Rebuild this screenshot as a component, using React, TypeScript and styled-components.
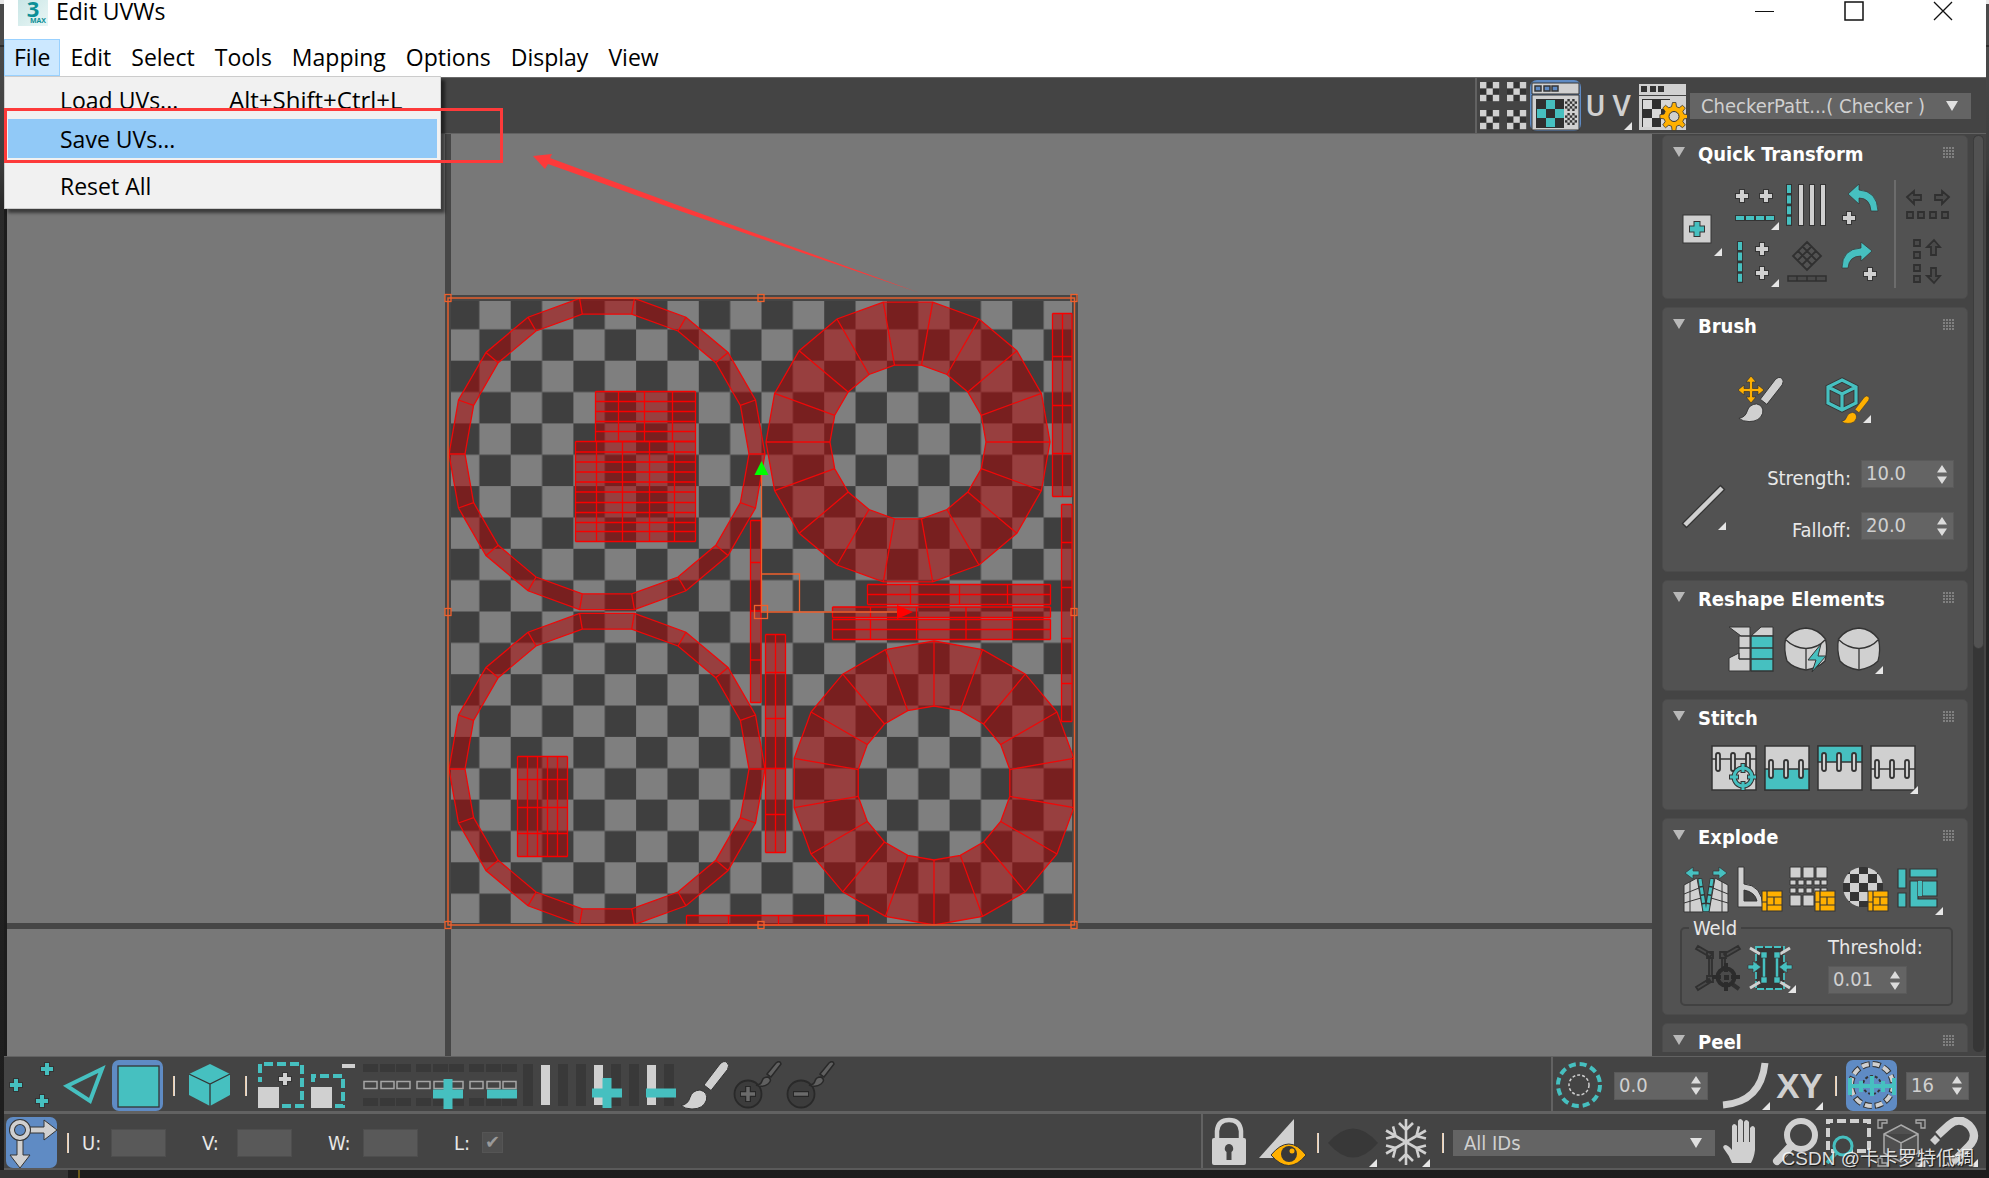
import React from 'react';
import styled, { createGlobalStyle, css } from 'styled-components';

const LIGHT = '#d0d0d0';
const TEAL = '#46c0c0';
const AMBER = '#ffb000';
const INK = '#343434';
const BLUE = '#5f8bc4';
const PANEL = '#444444';
const UI = "'DejaVu Sans Condensed', 'Noto Sans', sans-serif";
const SYS = "'Open Sans', 'Noto Sans', sans-serif";

const GlobalStyle = createGlobalStyle`
  * { box-sizing: border-box; }
  html, body { margin: 0; padding: 0; background: #232323; overflow: hidden; }
  button, input, select { font: inherit; color: inherit; margin: 0; }
`;

/* ---------- frame ---------- */

const Desktop = styled.div`
  position: relative;
  height: 100vh;
  padding: 0 3px 8px 4px;
  background:
    linear-gradient(90deg, #363636 68px, transparent 68px, transparent 78px, #6b5a1c 78px, #6b5a1c 80px, transparent 80px) bottom / 100% 8px no-repeat,
    linear-gradient(#e8e8e8 4px, #4a4a4a 4px, #4a4a4a 45px, #2c2c2c 45px, #2c2c2c 47px, #4a4a4a 47px, #3d3d3d 160px, #2a2a2a 205px, #1d1d1d) top / 100% 100% no-repeat;
`;
const Window = styled.div`
  display: flex;
  flex-direction: column;
  height: 100%;
  background: ${PANEL};
`;
const TitleBar = styled.header`
  display: flex;
  align-items: flex-start;
  height: 39px;
  padding: 0 19px 0 14px;
  background: #fff;
  color: #000;
  font: 23px/22px ${SYS};
`;
const AppIcon = styled.span`
  display: flex;
  flex-direction: column;
  width: 30px;
  height: 26px;
  margin-right: 8px;
  background: linear-gradient(135deg, #c9e6e6, #e9f6f5);
  color: #0d8f97;
  font: 700 22px/17px ${SYS};
  text-align: center;
`;
const AppIconTag = styled.small`
  padding-left: 10px;
  font: 700 7px/8px ${SYS};
`;
const WindowTitle = styled.h1`
  flex: 1;
  margin: 0;
  font: inherit;
`;
const WindowButtons = styled.div`
  display: flex;
  gap: 40px;
`;
const WindowButton = styled.button`
  width: 49px;
  height: 22px;
  padding: 0;
  border: 0;
  background: none;
  svg { display: block; margin: 0 auto; }
`;
const MenuBar = styled.nav`
  position: relative;
  display: flex;
  height: 38px;
  background: #fff;
  color: #000;
  font: 23px/34px ${SYS};
`;
const MenuButton = styled.button<{ $open?: boolean }>`
  height: 37px;
  padding: 0 9px 1px;
  border: 1px solid ${p => (p.$open ? '#99d1ff' : 'transparent')};
  background: ${p => (p.$open ? '#cce8ff' : 'none')};
`;
const Menu = styled.div`
  position: absolute;
  z-index: 3;
  top: 37px;
  left: 0;
  width: 437px;
  padding: 3px;
  border: 1px solid #cccccc;
  background: #f1f1f1;
  box-shadow: 4px 4px 3px rgba(0, 0, 0, 0.5);
  line-height: 36px;
`;
const MenuItem = styled.button<{ $hot?: boolean }>`
  display: grid;
  grid-template-columns: 169px 1fr;
  width: 100%;
  height: 39px;
  padding: 2px 0 0 52px;
  border: 0;
  background: ${p => (p.$hot ? '#91c9f7' : 'none')};
  text-align: left;
`;
const Shortcut = styled.span`
  font-size: 24px;
`;
const MenuRule = styled.hr`
  height: 1px;
  margin: 3px 0 4px 40px;
  border: 0;
  background: #d0d0d0;
`;

/* ---------- shared tool parts ---------- */

const ToolButton = styled.button<{ $on?: boolean }>`
  position: relative;
  flex: none;
  width: 51px;
  height: 51px;
  padding: 0;
  border: 0;
  border-radius: 7px;
  background: ${p => (p.$on ? BLUE : 'none')};
  svg { display: block; }
`;
const Flyout = styled.span`
  position: absolute;
  right: 2px;
  bottom: 1px;
  border-bottom: 8px solid #e6e6e6;
  border-left: 8px solid transparent;
`;
const Glyph = styled.span`
  display: block;
  color: ${LIGHT};
  font: 700 35px/46px 'Liberation Sans', sans-serif;
  white-space: nowrap;
`;
const ThinGlyph = styled(Glyph)`
  font: 500 29px/46px Roboto, sans-serif;
`;
const Bar = styled.span<{ $w?: number }>`
  flex: none;
  width: ${p => p.$w || 17}px;
  height: 20px;
  background: linear-gradient(90deg, #f3c596, #d8e4f0) center / 2px 100% no-repeat;
`;
const Group = styled.div<{ $gap?: number; $rule?: boolean }>`
  display: flex;
  align-items: center;
  gap: ${p => p.$gap ?? 2}px;
  ${p => p.$rule && css`
    align-self: stretch;
    border-left: 2px solid #626262;
  `}
`;
const SelectBox = styled.span<{ $w: number }>`
  position: relative;
  width: ${p => p.$w}px;
  height: 26px;
  &::after {
    content: '';
    position: absolute;
    top: 8px;
    right: 13px;
    border-top: 10px solid #e0e0e0;
    border-left: 6px solid transparent;
    border-right: 6px solid transparent;
  }
`;
const Select = styled.select`
  appearance: none;
  display: block;
  width: 100%;
  height: 100%;
  padding: 0 30px 0 11px;
  border: 0;
  background: #646464;
  color: ${LIGHT};
  font: 20px/26px ${UI};
`;
const SpinBox = styled.span<{ $w: number }>`
  display: flex;
  align-items: center;
  flex: none;
  width: ${p => p.$w}px;
  height: 28px;
  padding-right: 6px;
  border: 1px solid #5a5a5a;
  background: #646464;
`;
const SpinInput = styled.input`
  flex: 1;
  min-width: 0;
  height: 24px;
  padding: 0 0 2px 4px;
  border: 0;
  background: none;
  color: ${LIGHT};
  font: 20px/24px ${UI};
`;
const Label = styled.label`
  color: #e8e8e8;
  font: 20px/24px ${UI};
`;

/* ---------- top tool bar ---------- */

const TopBar = styled.div`
  display: flex;
  justify-content: flex-end;
  height: 57px;
  border-top: 1px solid #6a6a6a;
  border-bottom: 1px solid #626262;
  padding-right: 15px;
  ${SelectBox} { margin-left: 1px; }
`;

/* ---------- work area ---------- */

const Work = styled.main`
  display: flex;
  flex: 1;
  min-height: 0;
`;
const Viewport = styled.section`
  flex: 1;
  min-width: 0;
  border-left: 3px solid #1c1c1c;
  background: #787878;
  svg { display: block; }
`;
const Sidebar = styled.aside`
  display: flex;
  gap: 5px;
  padding: 1px 2px 4px 10px;
`;
const Rollups = styled.div`
  display: flex;
  flex-direction: column;
  gap: 8px;
  width: 306px;
  overflow: hidden;
`;
const Scroll = styled.div`
  width: 11px;
  border-radius: 6px;
  background: #363636;
`;
const Thumb = styled.div`
  height: 56%;
  border: 1px solid #3c3c3c;
  border-radius: 6px;
  background: #525252;
`;
const Rollup = styled.section`
  flex: none;
  border: 1px solid #4b4b4b;
  border-radius: 5px;
  background: #525252;
`;
const RollupHead = styled.header`
  display: flex;
  align-items: center;
  height: 36px;
  padding: 0 13px 0 10px;
`;
const Caret = styled.span`
  margin-right: 13px;
  margin-bottom: 4px;
  border-top: 10px solid #b8b8b8;
  border-left: 6px solid transparent;
  border-right: 6px solid transparent;
`;
const RollupTitle = styled.h2`
  flex: 1;
  margin: 0;
  color: #fff;
  font: 700 20px/28px ${UI};
`;
const Grip = styled.span`
  width: 12px;
  height: 12px;
  margin-bottom: 4px;
  background:
    repeating-linear-gradient(90deg, #525252 0 1px, transparent 1px 3px),
    repeating-linear-gradient(#525252 0 1px, #808080 1px 3px);
`;
const IconRow = styled.div<{ $left: number; $top: number; $bottom?: number; $gap?: number }>`
  display: flex;
  gap: ${p => p.$gap ?? 2}px;
  padding: ${p => p.$top}px 0 ${p => p.$bottom ?? 0}px ${p => p.$left}px;
`;
const QuickBody = styled.div`
  display: flex;
  align-items: center;
  gap: 6px;
  padding: 8px 0 10px 10px;
  > button { margin-bottom: 6px; }
`;
const QuickGrid = styled.div<{ $cols: number }>`
  display: grid;
  grid-template-columns: repeat(${p => p.$cols}, 51px);
  gap: 6px 2px;
`;
const QuickRule = styled.span`
  align-self: stretch;
  width: 2px;
  margin: 0 3px 0 1px;
  background: #6c6c6c;
`;
const BrushBody = styled.div`
  display: flex;
  justify-content: space-between;
  align-items: center;
  padding: 36px 13px 29px 14px;
  > button { margin-top: 8px; }
`;
const Fields = styled.div`
  display: grid;
  grid-template-columns: auto 93px;
  gap: 22px 10px;
  justify-items: end;
  ${Label} { padding-top: 6px; }
`;
const Weld = styled.fieldset`
  display: flex;
  gap: 2px;
  margin: 0 14px 8px 17px;
  padding: 3px 0 10px 12px;
  border: 2px solid #414141;
  border-radius: 5px;
`;
const Legend = styled.legend`
  margin-left: -5px;
  padding: 0 4px;
  color: #e8e8e8;
  font: 20px/24px ${UI};
`;
const Threshold = styled.div`
  display: flex;
  flex-direction: column;
  gap: 7px;
  margin: -8px 0 0 28px;
`;

/* ---------- bottom bars ---------- */

const BottomRow = styled.div<{ $last?: boolean }>`
  display: flex;
  justify-content: space-between;
  height: ${p => (p.$last ? 59 : 55)}px;
  padding-left: 2px;
  border-top: ${p => (p.$last ? 3 : 1)}px solid #626262;
  ${p => p.$last && css`border-bottom: 2px solid #5a5a5a;`}
  > div { padding-top: 3px; }
`;
const Coord = styled.span<{ $label: number }>`
  display: grid;
  grid-template-columns: ${p => p.$label}px auto;
  align-items: center;
`;
const Coords = styled.div`
  display: flex;
  align-items: center;
  gap: 36px;
  padding-left: 4px;
`;
const CoordInput = styled.input`
  width: 55px;
  height: 28px;
  border: 1px solid #4e4e4e;
  background: #595959;
`;
const Check = styled.input`
  appearance: none;
  width: 21px;
  height: 21px;
  border: 1px solid #555;
  background: #4f4f4f;
  &:checked::after {
    content: '✔';
    display: block;
    color: #999;
    font: 18px/18px 'DejaVu Sans', sans-serif;
    text-align: center;
  }
`;
const RightRow = styled(Group)`
  padding-right: 6px;
`;
const SpinGap = styled.span<{ $l: number; $r: number }>`
  display: flex;
  padding: 0 ${p => p.$r}px 0 ${p => p.$l}px;
`;
const Annotation = styled.svg`
  position: absolute;
  z-index: 4;
  top: 0;
  left: 0;
  pointer-events: none;
`;
const Watermark = styled.span`
  position: absolute;
  z-index: 5;
  right: 15px;
  bottom: 5px;
  color: rgba(255, 255, 255, 0.86);
  font: 19px/28px 'Liberation Sans', 'Noto Sans CJK SC', sans-serif;
  text-shadow: 1px 1px 1px rgba(0, 0, 0, 0.7);
  white-space: nowrap;
`;

/* ---------- icon drawing helpers ---------- */

const Plus = ({ x, y, r = 6, w = 4, c = LIGHT }: { x: number; y: number; r?: number; w?: number; c?: string }) => (
  <g>
    <path d={`M${x - r - 1} ${y}h${2 * r + 2}M${x} ${y - r - 1}v${2 * r + 2}`} stroke={INK} strokeWidth={w + 2} />
    <path d={`M${x - r} ${y}h${2 * r}M${x} ${y - r}v${2 * r}`} stroke={c} strokeWidth={w} />
  </g>
);

const Tool = ({ label, on, fly, children }: { label: string; on?: boolean; fly?: boolean; children: React.ReactNode }) => (
  <ToolButton type="button" aria-label={label} title={label} $on={on}>
    <svg width="51" height="51" viewBox="0 0 51 51" fill="none">{children}</svg>
    {fly && <Flyout />}
  </ToolButton>
);

const Spin = ({ id, value, w }: { id: string; value: string; w: number }) => (
  <SpinBox $w={w}>
    <SpinInput id={id} defaultValue={value} aria-label={id} />
    <svg width="10" height="19" viewBox="0 0 10 19" fill="#dcdcdc"><path d="M0 7.500L5 0l5 7.500zM0 11.500h10L5 19z" /></svg>
  </SpinBox>
);

const checks = (n: number, s: number, x: number, y: number, a: string, b?: string) => {
  const out: React.ReactNode[] = [];
  for (let i = 0; i < n; i++)
    for (let j = 0; j < n; j++) {
      const fill = (i + j) % 2 === 0 ? a : b;
      if (fill) out.push(<rect key={`${i}${j}`} x={x + i * s} y={y + j * s} width={s} height={s} fill={fill} />);
    }
  return out;
};

const BrushShape = ({ c = LIGHT }: { c?: string }) => (
  <g stroke={INK} strokeWidth="1">
    <path d="M24 25L40 4q4-4 7-1.500t.5 7L31 30.500z" fill={c} />
    <path d="M1 45.500q7-1 9-8t10-7.500q8 2 6.500 10-3 9-14.500 9-7 0-11-3.500z" fill={c} />
  </g>
);

const LoopRows = () => (
  <g>
    {[1, 18, 34].map(x => (
      <g key={x}>
        <rect x={x} y="4" width="15" height="8" fill="#393939" />
        <rect x={x} y="38" width="15" height="8" fill="#393939" />
        <rect x={x + 1} y="21.500" width="13" height="7" stroke="#a5a5a5" strokeWidth="1.500" />
      </g>
    ))}
  </g>
);
const RingCols = () => (
  <g>
    <path d="M2 4h10v42H2zM37 4h10v42H37z" fill="#393939" />
    <rect x="20" y="5" width="9" height="40" fill={LIGHT} />
  </g>
);
const PaintSel = ({ minus }: { minus?: boolean }) => (
  <g>
    <circle cx="15" cy="34" r="13.500" fill="#3c3c3c" stroke="#292929" strokeWidth="1.800" />
    <path d={minus ? 'M7 34h16' : 'M7 34h16M15 26v16'} stroke="#272727" strokeWidth="6" />
    <path d={minus ? 'M8 34h14' : 'M8 34h14M15 27v14'} stroke="#6b6b6b" strokeWidth="3.500" />
    <path d="M34 14l9-11q4-3 5 1L38 17zM23 25q5 0 6-4t6-4q5 3 0 7-5 4-12 1z" fill="#606060" stroke="#292929" strokeWidth="1.500" />
  </g>
);
const Stitches = ({ y }: { y: number }) => (
  <g fill={LIGHT} stroke={INK} strokeWidth="1.800">
    {[8, 23, 38].map(x => <rect key={x} x={x - 2} y={y} width="4" height="18" rx="2" />)}
  </g>
);
const Packed = ({ x, y }: { x: number; y: number }) => (
  <g transform={`translate(${x} ${y})`}>
    <rect width="20" height="20" fill={AMBER} stroke={INK} />
    <path d="M5 0v20M0 11h5M5 6h15M12 6v8h8M12 14H5" stroke={INK} strokeWidth="1.200" />
  </g>
);
const Disp = ({ d, fill = '#4a4a4a' }: { d: string; fill?: string }) => (
  <path d={d} fill={fill} stroke="#303030" strokeWidth="1.800" />
);

/* ---------- UV layout drawing ---------- */

const BOX = { x: 448, y: 298, s: 627 };

const Ring = ({ cx, cy, r, q, turn }: { cx: number; cy: number; r: number; q: number; turn: number }) => {
  const at = (rad: number, i: number) => {
    const t = ((turn + i * 20) * Math.PI) / 180;
    return `${(cx + rad * Math.cos(t)).toFixed(1)} ${(cy + rad * Math.sin(t)).toFixed(1)}`;
  };
  const idx = Array.from({ length: 18 }, (_, i) => i);
  const loop = (rad: number) => `M${idx.map(i => at(rad, i)).join('L')}Z`;
  return (
    <g>
      <path d={loop(r) + loop(q)} fill="#b20000" fillOpacity=".5" fillRule="evenodd" stroke="#f00808" strokeWidth="1.300" />
      <path d={idx.map(i => `M${at(r, i)}L${at(q, i)}`).join('')} stroke="#f00808" strokeWidth="1.300" />
    </g>
  );
};

const Mesh = ({ xs, ys }: { xs: number[]; ys: number[] }) => {
  const [x0, x1] = [xs[0], xs[xs.length - 1]];
  const [y0, y1] = [ys[0], ys[ys.length - 1]];
  return (
    <g>
      <rect x={x0} y={y0} width={x1 - x0} height={y1 - y0} fill="#b20000" fillOpacity=".5" />
      <path d={xs.map(x => `M${x} ${y0}V${y1}`).join('') + ys.map(y => `M${x0} ${y}H${x1}`).join('')} stroke="#f80000" strokeWidth="1.300" />
    </g>
  );
};

const meshes: { xs: number[]; ys: number[] }[] = [
  { xs: [595.5, 618.5, 644.5, 672.5, 695.5], ys: [391.5, 401.5, 411.5, 421.5, 431.5, 441.5] },
  { xs: [575.5, 596.5, 622.5, 649.5, 674.5, 695.5], ys: [441.5, 452, 462, 472, 482, 492, 502.5, 512.5, 522.5, 531.5, 541.5] },
  { xs: [517.5, 527.5, 537.5, 547.5, 557.5, 567.5], ys: [756.5, 779.5, 807.5, 833.5, 856.5] },
  { xs: [750.5, 761], ys: [520.5, 562.5, 611, 660, 702.5] },
  { xs: [765.5, 775.5, 785.5], ys: [634.5, 672.5, 718.5, 768.5, 814.5, 852.5] },
  { xs: [1052.5, 1062.5, 1072], ys: [313.5, 356.5, 405.5, 453.5, 496.5] },
  { xs: [1061.5, 1072], ys: [504.5, 542.5, 587.5, 638.5, 683.5, 721.5] },
  { xs: [867.5, 910.5, 959.5, 1007.5, 1050.5], ys: [584.5, 594.5, 604.5] },
  { xs: [832.5, 870.5, 916.5, 966, 1012.5, 1050.5], ys: [607, 617.5] },
  { xs: [832.5, 870.5, 916.5, 966, 1012.5, 1050.5], ys: [619.5, 629.5, 639.5] },
  { xs: [686.5, 728.5, 778.5, 826.5, 868.5], ys: [915.5, 925] },
];
const handles = [[448, 298], [761, 298], [1074, 298], [448, 612], [1074, 612], [448, 925], [761, 925], [1074, 925]];

const UvCanvas = () => (
  <svg width="100%" height="100%" fill="none">
    <defs>
      <pattern id="tile" x={BOX.x} y={BOX.y} width="62.7" height="62.7" patternUnits="userSpaceOnUse">
        <path d="M0 0h62.700v62.700H0z" fill="#7f7f7f" />
        <path d="M0 0h31.350v31.350H0zM31.350 31.350h31.350v31.350H31.350z" fill="#3f3f3f" />
      </pattern>
    </defs>
    <g transform="translate(-7 -134)">
      <path d="M448 100V1100M0 926H1700" stroke="#464646" strokeWidth="6" />
      <rect x={BOX.x} y={BOX.y} width={BOX.s} height={BOX.s} fill="url(#tile)" />
      <rect x={BOX.x} y={BOX.y} width={BOX.s} height={BOX.s + 1} stroke="#464646" strokeWidth="6" />
      <Ring cx={607} cy={454} r={158} q={142} turn={0} />
      <Ring cx={607} cy={769} r={158} q={142} turn={0} />
      <Ring cx={908} cy={442} r={142} q={78} turn={0} />
      <Ring cx={934} cy={783} r={142} q={77} turn={90} />
      {meshes.map((m, i) => <Mesh key={i} {...m} />)}
      <rect x="448" y="298" width="626.5" height="627" stroke="#e5602f" strokeWidth="1.500" />
      <g stroke="#f0602c" strokeWidth="1.300">
        {handles.map(([x, y]) => <rect key={`${x}-${y}`} x={x - 3} y={y - 3.500} width="6" height="7" />)}
        <path d="M761.500 475V612H898M761 574h38.500v38" />
        <rect x="754.500" y="605.500" width="13" height="13" />
      </g>
      <path d="M761.500 461l7 14h-14z" fill="#00ff00" />
      <path d="M897 605l16 7-16 7z" fill="#ff0000" />
    </g>
  </svg>
);

const Head = ({ title }: { title: string }) => (
  <RollupHead><Caret /><RollupTitle>{title}</RollupTitle><Grip /></RollupHead>
);

const RoundedCube = () => (
  <g fill={LIGHT} stroke={INK} strokeWidth="1.300">
    <path d="M25 4Q37 5 44.500 15 47 26 44 37 37 44 25 46 12 44 6 37 2.500 26 4.500 15 12 5 25 4z" />
    <path d="M4.500 15.500Q13 24 25 24.500 37 24 44.500 15.500M25 24.500v21" />
  </g>
);
const Cells = ({ d }: { d: string }) => <path d={d} fill={LIGHT} stroke={INK} strokeWidth="1" />;

export default function App() {
  return (
    <Desktop>
      <GlobalStyle />
      <Window>
        <TitleBar>
          <AppIcon>3<AppIconTag>MAX</AppIconTag></AppIcon>
          <WindowTitle>Edit UVWs</WindowTitle>
          <WindowButtons>
            <WindowButton aria-label="Minimize"><svg width="20" height="20" stroke="#111"><path d="M0 10.500h19" /></svg></WindowButton>
            <WindowButton aria-label="Maximize"><svg width="20" height="20" fill="none" stroke="#111" strokeWidth="1.500"><path d="M1 1h18v18H1z" /></svg></WindowButton>
            <WindowButton aria-label="Close"><svg width="20" height="20" stroke="#111" strokeWidth="1.300"><path d="M1 1l18 18M19 1L1 19" /></svg></WindowButton>
          </WindowButtons>
        </TitleBar>
        <MenuBar>
          {['File', 'Edit', 'Select', 'Tools', 'Mapping', 'Options', 'Display', 'View'].map((m, i) => (
            <MenuButton key={m} type="button" $open={i === 0}>{m}</MenuButton>
          ))}
          <Menu>
            <MenuItem type="button"><span>Load UVs...</span><Shortcut>Alt+Shift+Ctrl+L</Shortcut></MenuItem>
            <MenuItem type="button" $hot>Save UVs...</MenuItem>
            <MenuRule />
            <MenuItem type="button">Reset All</MenuItem>
          </Menu>
        </MenuBar>

        <TopBar>
          <Group $rule>
            <Tool label="Checker pattern">
              {[[3, 2], [30, 2], [3, 30], [30, 30]].map(([x, y]) => <g key={`${x}${y}`}><path d={`M${x} ${y}h19v19h-19z`} fill="#333" />{checks(3, 6.4, x, y, LIGHT)}</g>)}
            </Tool>
            <Tool label="Show map" on>
              <path d="M2 3h47v11H2zM2 15h47v35H2z" fill={LIGHT} stroke={INK} />
              <path d="M5 6h6v5H5zM14 6h6v5h-6zM22 6h6v5h-6z" fill={BLUE} stroke={INK} strokeWidth="1.500" />
              <path d="M6 19h28v29H6z" fill="#303030" />
              <path d="M16 20h9v9h9v9h-9v9h-9v-9H7v-9h9z" fill={TEAL} />
              <path d="M16 29h9v9h-9z" fill="#303030" />
              <path d="M35 19h12v12H35zM35 33h12v12H35z" fill="#333" />
              {checks(5, 2.4, 35, 19, LIGHT)}{checks(5, 2.4, 35, 33, LIGHT)}
            </Tool>
            <ToolButton type="button" aria-label="UV space"><ThinGlyph>U V</ThinGlyph><Flyout /></ToolButton>
            <Tool label="Map options">
              <path d="M3 4h47v11H3zM3 16h47v34H3z" fill={LIGHT} />
              <path d="M5 6h6v6H5zM14 6h6v6h-6zM22 6h6v6h-6z" fill="#333" />
              <path d="M6 19h28v28H6z" fill="#303030" />
              {checks(3, 9, 7, 20, '#d8d8d8')}
              <path d="M0 0h3.400l.6 4.200 2.700 1.100L10 2.800l2.800 2.800-2.500 3.300 1.100 2.700 4.200.6v3.600l-4.200.6-1.100 2.700 2.500 3.300L10 25.200l-3.300-2.500L4 23.800 3.400 28h-3.800l-.6-4.200-2.700-1.100L-7 25.200l-2.800-2.800 2.500-3.300-1.100-2.700-4.200-.6v-3.600l4.200-.6 1.100-2.700-2.500-3.300L-7 2.800l3.300 2.500L-1 4.200z" transform="translate(36.500 22.500)" fill={AMBER} stroke={INK} strokeWidth=".8" />
              <circle cx="38" cy="36.500" r="5" fill={LIGHT} stroke={INK} />
            </Tool>
            <SelectBox $w={281}>
              <Select aria-label="Texture" defaultValue="c"><option value="c">CheckerPatt...( Checker )</option></Select>
            </SelectBox>
          </Group>
        </TopBar>

        <Work>
          <Viewport><UvCanvas /></Viewport>
          <Sidebar>
            <Rollups>
              <Rollup>
                <Head title="Quick Transform" />
                <QuickBody>
                  <Tool label="Pivot" fly>
                    <rect x="10" y="9" width="28" height="28" fill={LIGHT} stroke={INK} />
                    <Plus x={24} y={23} r={7} w={5} c={TEAL} />
                  </Tool>
                  <QuickGrid $cols={3}>
                    <Tool label="Align horizontal" fly>
                      <Plus x={12} y={16} /><Plus x={36} y={16} />
                      <path d="M5 38h40" stroke={INK} strokeWidth="6" /><path d="M6 38h38" stroke={TEAL} strokeWidth="4" strokeDasharray="8 2" />
                    </Tool>
                    <Tool label="Linear align">
                      <path d="M6 4v42" stroke={INK} strokeWidth="6" /><path d="M6 5v40" stroke={TEAL} strokeWidth="4" strokeDasharray="8 2.600" />
                      <path d="M18 4v42M29 4v42M40 4v42" stroke={INK} strokeWidth="6" /><path d="M18 5v40M29 5v40M40 5v40" stroke={LIGHT} strokeWidth="4" />
                    </Tool>
                    <Tool label="Rotate +90">
                      <path d="M12 14L23 4v6q18 1 19 21h-7q-1-13-12-13v6z" fill={TEAL} stroke={INK} strokeWidth=".7" />
                      <Plus x={13} y={38} />
                    </Tool>
                    <Tool label="Align vertical" fly>
                      <path d="M10 4v42" stroke={INK} strokeWidth="6" /><path d="M10 5v40" stroke={TEAL} strokeWidth="4" strokeDasharray="8 2.600" />
                      <Plus x={32} y={12} /><Plus x={32} y={36} />
                    </Tool>
                    <Tool label="Straighten">
                      <path d="M24 5l14 14-14 14L10 19zM19.500 9.500l14 14M15 14l14 14M28.500 9.500l-14 14M33 14L19 28" stroke="#303030" strokeWidth="1.800" />
                      <path d="M5 39h38v5H5zM14 39v5M24 39v5M33 39v5" fill="#4a4a4a" stroke="#303030" strokeWidth="1.500" />
                    </Tool>
                    <Tool label="Rotate -90">
                      <path d="M36 14L25 5v6Q6 12 6 31h6q1-12 13-12v5z" fill={TEAL} stroke={INK} strokeWidth=".7" />
                      <Plus x={34} y={37} />
                    </Tool>
                  </QuickGrid>
                  <QuickRule />
                  <QuickGrid $cols={1}>
                    <Tool label="Space horizontally">
                      <Disp d="M2 17l7-6v4h7v5H9v4zM44 17l-7-6v4h-7v5h7v4z" />
                      <Disp d="M2 32h6v6H2zM13 32h6v6h-6zM25 32h6v6h-6zM37 32h6v6h-6z" />
                    </Tool>
                    <Tool label="Space vertically">
                      <Disp d="M9 3h6v6H9zM9 15h6v6H9zM9 28h6v6H9zM9 39h6v6H9z" />
                      <Disp d="M29 3l6 7h-4v8h-5v-8h-4zM29 46l6-7h-4v-8h-5v8h-4z" />
                    </Tool>
                  </QuickGrid>
                </QuickBody>
              </Rollup>

              <Rollup>
                <Head title="Brush" />
                <IconRow $left={73} $top={29} $gap={35}>
                  <Tool label="Paint move brush">
                    <g transform="translate(2 3) scale(.93)"><BrushShape /></g>
                    <path d="M15 3l5 6h-3.500v6.500H22V12l6 5-6 5v-3.500h-5.500V24H20l-5 6-5-6h3.500v-5.500H8V22l-6-5 6-5v3.500h5.500V9H10z" fill={AMBER} stroke={INK} strokeWidth=".7" />
                  </Tool>
                  <Tool label="Relax brush" fly>
                    <path d="M20 7l14 7v16l-14 7-14-7V14zM6 14l14 7 14-7M20 21v16" stroke={INK} strokeWidth="5" />
                    <path d="M20 7l14 7v16l-14 7-14-7V14zM6 14l14 7 14-7M20 21v16" stroke={TEAL} strokeWidth="3.200" />
                    <g transform="translate(19 22) scale(.58)"><BrushShape c={AMBER} /></g>
                  </Tool>
                </IconRow>
                <BrushBody>
                  <Tool label="Falloff type" fly>
                    <path d="M7 46L46 7" stroke={INK} strokeWidth="7" /><path d="M8 45L45 8" stroke={LIGHT} strokeWidth="4.500" />
                  </Tool>
                  <Fields>
                    <Label htmlFor="Strength">Strength:</Label><Spin id="Strength" value="10.0" w={93} />
                    <Label htmlFor="Falloff">Falloff:</Label><Spin id="Falloff" value="20.0" w={93} />
                  </Fields>
                </BrushBody>
              </Rollup>

              <Rollup>
                <Head title="Reshape Elements" />
                <IconRow $left={65} $top={7} $bottom={15}>
                  <Tool label="Straighten selection">
                    <Cells d="M1 3h21v9h-9zM11 12h11v12H11zM11 24h11v11H11zM1 34l10-5v6h11v12H1zM33 3h12v9H23z" />
                    <path d="M23 12h22v12H23zM23 24h22v11H23zM23 35h22v12H23z" fill={TEAL} stroke={INK} strokeWidth="1.300" />
                  </Tool>
                  <Tool label="Relax until flat">
                    <RoundedCube />
                    <path d="M40 20L27 36h8l-4 12 14-16h-8z" fill={TEAL} stroke={INK} />
                  </Tool>
                  <Tool label="Relax" fly><RoundedCube /></Tool>
                </IconRow>
              </Rollup>

              <Rollup>
                <Head title="Stitch" />
                <IconRow $left={47} $top={8} $bottom={14}>
                  <Tool label="Stitch custom">
                    <path d="M2 2h44v44H2zM2 15h44" fill={LIGHT} stroke={INK} strokeWidth="1.500" />
                    <Stitches y={9} />
                    <circle cx="33" cy="33" r="9" fill={LIGHT} stroke={INK} strokeWidth="5" />
                    <path d="M33 19v10M33 37v10M19 33h10M37 33h10" stroke={INK} strokeWidth="5" />
                    <circle cx="33" cy="33" r="9" stroke={TEAL} strokeWidth="3" />
                    <path d="M33 20v8M33 38v8M20 33h8M38 33h8" stroke={TEAL} strokeWidth="3" />
                  </Tool>
                  <Tool label="Stitch to target">
                    <path d="M2 2h44v44H2z" fill={LIGHT} stroke={INK} strokeWidth="1.500" />
                    <path d="M2 25h44v21H2z" fill={TEAL} stroke={INK} strokeWidth="1.500" />
                    <Stitches y={16} />
                  </Tool>
                  <Tool label="Stitch to source">
                    <path d="M2 2h44v44H2z" fill={LIGHT} stroke={INK} strokeWidth="1.500" />
                    <path d="M2 2h44v16H2z" fill={TEAL} stroke={INK} strokeWidth="1.500" />
                    <Stitches y={9} />
                  </Tool>
                  <Tool label="Stitch to average" fly>
                    <path d="M2 2h44v44H2zM2 25h44" fill={LIGHT} stroke={INK} strokeWidth="1.500" />
                    <Stitches y={16} />
                  </Tool>
                </IconRow>
              </Rollup>

              <Rollup>
                <Head title="Explode" />
                <IconRow $left={19} $top={10}>
                  <Tool label="Break">
                    <path d="M3 8l8-6v4h6v4h-6v4zM45 8l-8-6v4h-6v4h6v4z" fill={TEAL} stroke={INK} strokeWidth=".7" />
                    <Cells d="M2 20l13-7 6 34H2zM46 20l-13-7-6 34h19z" />
                    <path d="M2 29l15-6M2 38l17-5M8 17v30M46 29l-15-6M46 38l-17-5M40 17v30" stroke={INK} />
                    <path d="M16 13h4l4 22 4-22h4l-5 34h-6z" fill={INK} />
                    <path d="M18 14l5 33M30 14l-5 33" stroke={TEAL} strokeWidth="3" strokeDasharray="7 1.500" />
                  </Tool>
                  <Tool label="Flatten by angle">
                    <path d="M3 2h6v17q18 1 19 23H3z" fill={LIGHT} stroke={INK} />
                    <path d="M9 25q11 2 13 11H9z" fill="#444" stroke={INK} />
                    <Packed x={27} y={26} />
                  </Tool>
                  <Tool label="Flatten by smoothing group">
                    <Cells d="M2 2h11v11H2zM15 2h11v11H15zM28 2h11v11H28zM2 15h6v5H2zM10 15h6v5h-6zM18 15h6v5h-6zM26 15h6v5h-6zM33 15h6v5h-6zM2 23h6v5H2zM10 23h6v5h-6zM18 23h6v5h-6zM26 23h6v5h-6zM33 23h6v5h-6zM2 30h11v11H2zM15 30h11v11H15z" />
                    <Packed x={27} y={26} />
                  </Tool>
                  <Tool label="Flatten by material">
                    <clipPath id="ball"><circle cx="22" cy="22" r="20" /></clipPath>
                    <circle cx="22" cy="22" r="20" fill={INK} />
                    <g clipPath="url(#ball)">{checks(5, 9, 0, 0, INK, LIGHT)}</g>
                    <Packed x={27} y={26} />
                  </Tool>
                  <Tool label="Flatten custom" fly>
                    <path d="M4 4h8v19H4zM4 28h8v14H4zM16 4h27v8H16zM16 16h8v18h19v8H16zM28 16h15v15H28z" fill={TEAL} stroke={INK} strokeWidth="1.200" />
                    <path d="M24 16h4v15h-4z" fill={TEAL} />
                  </Tool>
                </IconRow>
                <Weld>
                  <Legend>Weld</Legend>
                  <Tool label="Target weld">
                    <Disp d="M2 6l2-3 14 8-2 3zM46 6l-2-3-14 8 2 3zM2 44l2 3 13-8-2-3zM13 9h6v6h-6zM26 9h6v6h-6zM13 33h6v6h-6zM15 15h3v18h-3zM28 15h3v9h-3z" />
                    <path d="M38 41l7 5" stroke="#303030" strokeWidth="4" />
                    <circle cx="32" cy="34" r="8.500" fill="#4a4a4a" stroke="#2c2c2c" strokeWidth="4" />
                    <path d="M32 20v9M32 39v9M18 34h9M37 34h9" stroke="#2c2c2c" strokeWidth="4" />
                    <path d="M30 32h5v5h-5z" fill="#2c2c2c" />
                  </Tool>
                  <Tool label="Weld selected" fly>
                    <path d="M9 4h28v42H9z" fill="#363636" stroke={TEAL} strokeWidth="1.800" strokeDasharray="7 2" />
                    <path d="M3 5l10 6M43 5l-10 6M3 45l10-6M43 45l-10-6" stroke={LIGHT} strokeWidth="3" />
                    <path d="M17 12v24M30 12v24" stroke={TEAL} strokeWidth="2.500" />
                    <path d="M14 9h6v6h-6zM27 9h6v6h-6zM14 34h6v6h-6zM27 34h6v6h-6zM1 22h5v-4l8 6-8 6v-4H1zM45 22h-5v-4l-8 6 8 6v-4h5z" fill={TEAL} stroke={INK} strokeWidth=".6" />
                  </Tool>
                  <Threshold>
                    <Label htmlFor="Threshold">Threshold:</Label>
                    <Spin id="Threshold" value="0.01" w={79} />
                  </Threshold>
                </Weld>
              </Rollup>

              <Rollup>
                <Head title="Peel" />
              </Rollup>
            </Rollups>
            <Scroll><Thumb /></Scroll>
          </Sidebar>
        </Work>

        <BottomRow>
          <Group>
            <Tool label="Vertex"><Plus x={10} y={25} c={TEAL} /><Plus x={41} y={9} c={TEAL} /><Plus x={36} y={41} c={TEAL} /></Tool>
            <Tool label="Edge"><path d="M8 26L43 9 31 41z" stroke={TEAL} strokeWidth="4" /></Tool>
            <Tool label="Polygon" on><rect x="6" y="6" width="41" height="41" fill={TEAL} stroke={INK} strokeWidth="1.300" /></Tool>
            <Bar />
            <Tool label="Element">
              <path d="M26 4l20 10v21L26 46 5 35V14z" fill={TEAL} />
              <path d="M5 14l21 10 20-10M26 24v22" stroke={INK} strokeWidth="1.300" />
            </Tool>
            <Bar />
            <Tool label="Grow">
              <path d="M4 22V4h42v42H24" stroke={TEAL} strokeWidth="4" strokeDasharray="9 4" strokeDashoffset="4" />
              <path d="M2 27h21v21H2z" fill={LIGHT} /><Plus x={29} y={19} />
            </Tool>
            <Tool label="Shrink">
              <path d="M4 22v-6h30v30h-9" stroke={TEAL} strokeWidth="4" strokeDasharray="9 4" />
              <path d="M2 27h21v21H2zM33 4h13v4H33z" fill={LIGHT} />
            </Tool>
            <Tool label="Loop"><LoopRows /></Tool>
            <Tool label="Grow loop"><LoopRows /><path d="M18 34h30M33 19v30" stroke={TEAL} strokeWidth="9" /></Tool>
            <Tool label="Shrink loop"><LoopRows /><path d="M19 34h30" stroke={TEAL} strokeWidth="9" /></Tool>
            <Tool label="Ring"><RingCols /></Tool>
            <Tool label="Grow ring"><RingCols /><path d="M18 33h30M33 18v30" stroke={TEAL} strokeWidth="9" /></Tool>
            <Tool label="Shrink ring"><RingCols /><path d="M19 33h30" stroke={TEAL} strokeWidth="9" /></Tool>
            <Tool label="Paint select"><BrushShape /></Tool>
            <Tool label="Enlarge brush"><PaintSel /></Tool>
            <Tool label="Shrink brush"><PaintSel minus /></Tool>
          </Group>
          <RightRow $rule>
            <Tool label="Soft selection">
              <circle cx="26" cy="25" r="21" stroke={TEAL} strokeWidth="4" strokeDasharray="7 4" />
              <circle cx="26" cy="25" r="10" stroke={LIGHT} strokeWidth="1.500" strokeDasharray="3 2" />
            </Tool>
            <SpinGap $l={8} $r={11}><Spin id="Soft falloff" value="0.0" w={94} /></SpinGap>
            <Tool label="Falloff curve" fly><path d="M2 45Q40 42 44 3" stroke={LIGHT} strokeWidth="7" /></Tool>
            <ToolButton type="button" aria-label="Falloff space"><Glyph>XY</Glyph><Flyout /></ToolButton>
            <Bar />
            <Tool label="Limit by edges" on>
              <circle cx="26" cy="25" r="21" stroke={INK} strokeWidth="6" strokeDasharray="8 3" />
              <circle cx="26" cy="25" r="21" stroke={LIGHT} strokeWidth="4" strokeDasharray="7 4" />
              <circle cx="26" cy="25" r="9" stroke={INK} strokeWidth="2" strokeDasharray="3 2" />
              <path d="M2 26h47M4 18v17M15 21v11M26 16v20M37 21v11M48 18v17" stroke={TEAL} strokeWidth="4" />
            </Tool>
            <SpinGap $l={7} $r={11}><Spin id="Edge steps" value="16" w={63} /></SpinGap>
          </RightRow>
        </BottomRow>

        <BottomRow $last>
          <Group>
            <Tool label="Absolute offset" on>
              <g stroke={INK} strokeWidth="1" fill={LIGHT}>
                <path d="M20 10h18V3l13 10-13 10v-7H20zM11 20v18H4l10 13 10-13h-7V20z" />
              </g>
              <circle cx="14" cy="13" r="8" fill={BLUE} stroke={INK} strokeWidth="6" /><circle cx="14" cy="13" r="8" stroke={LIGHT} strokeWidth="4" />
            </Tool>
            <Bar />
            <Coords>
              <Coord $label={29}><Label htmlFor="u">U:</Label><CoordInput id="u" /></Coord>
              <Coord $label={35}><Label htmlFor="v">V:</Label><CoordInput id="v" /></Coord>
              <Coord $label={35}><Label htmlFor="w">W:</Label><CoordInput id="w" /></Coord>
              <Coord $label={28}><Label htmlFor="l">L:</Label><Check id="l" type="checkbox" defaultChecked /></Coord>
            </Coords>
          </Group>
          <RightRow $rule>
            <Tool label="Lock selection">
              <path d="M14 22V14q1-11 12-11t12 11v8" stroke={LIGHT} strokeWidth="4.500" />
              <path d="M11 21h30q2 0 2 2v23q0 2-2 2H11q-2 0-2-2V23q0-2 2-2z" fill={LIGHT} />
              <path d="M26 27a4.500 4.500 0 0 1 2.500 8v8h-5v-8a4.500 4.500 0 0 1 2.500-8z" fill={PANEL} />
            </Tool>
            <Tool label="Display filter">
              <path d="M3 41L38 2v39z" fill={LIGHT} />
              <path d="M15 38q18-22 35 0-17 21-35 0z" fill={AMBER} stroke={INK} />
              <circle cx="33" cy="37" r="8" fill="#383838" /><circle cx="36" cy="34" r="2.500" fill={AMBER} />
            </Tool>
            <Bar />
            <Tool label="Hide" fly><path d="M0 26Q25-3 50 26 25 55 0 26z" fill="#383838" /></Tool>
            <Tool label="Freeze" fly>
              <g stroke={LIGHT} strokeWidth="2.600">
                {[0, 60, 120, 180, 240, 300].map(a => <path key={a} transform={`rotate(${a} 25 25)`} d="M25 25V2M18 6l7 7 7-7" />)}
              </g>
            </Tool>
            <Bar />
            <SelectBox $w={262}><Select aria-label="Material IDs" defaultValue="all"><option value="all">All IDs</option></Select></SelectBox>
            <Tool label="Pan">
              <path d="M15 46q-3-8-8-14-2-3 1-4 3 0 7 5V9q2-4 5 0v16h1V4q2-4 5 0v21h1V5q2-4 5 0v20h1V11q3-4 5 0v22q-1 8-4 13z" fill={LIGHT} />
            </Tool>
            <Tool label="Zoom">
              <circle cx="31" cy="18" r="14" stroke={LIGHT} strokeWidth="6" /><path d="M21 29L7 44" stroke={LIGHT} strokeWidth="8" strokeLinecap="round" />
            </Tool>
            <Tool label="Zoom region">
              <path d="M5 4h41v30H5z" stroke={LIGHT} strokeWidth="4" strokeDasharray="9 4" strokeDashoffset="4" />
              <circle cx="20" cy="29" r="9" fill={PANEL} stroke={TEAL} strokeWidth="3" /><path d="M13 36L4 46" stroke={TEAL} strokeWidth="4" />
            </Tool>
            <Tool label="Zoom extents" fly>
              <path d="M25 8l17 9v19l-17 9-17-9V17zM8 17l17 9 17-9M25 26v19" fill="#505050" stroke="#aaa" strokeWidth="1.500" />
              <path d="M2 3h9v3H6v5H2zM49 3h-9v3h5v5h4zM2 49h9v-3H6v-5H2zM49 49h-9v-3h5v-5h4z" stroke="#aaa" strokeWidth="1.300" />
            </Tool>
            <Tool label="Snap" fly>
              <path d="M9 18L20 8q10-9 20 0 10 11 0 21L28 41" stroke={LIGHT} strokeWidth="8" />
              <path d="M1 23l5-5 5 5-5 5zM20 42l4-4 7 5-5 5z" fill={LIGHT} />
            </Tool>
          </RightRow>
        </BottomRow>
      </Window>

      <Annotation width="1000" height="320" fill="none">
        <rect x="5.500" y="109.500" width="496" height="52" stroke="#fd3a3a" strokeWidth="3" />
        <path d="M533 156l19-2-2 4 130 48 240 87-240-82-132-47-3 5z" fill="#fd3a3a" />
      </Annotation>
      <Watermark>CSDN @卡卡罗特低调</Watermark>
    </Desktop>
  );
}
